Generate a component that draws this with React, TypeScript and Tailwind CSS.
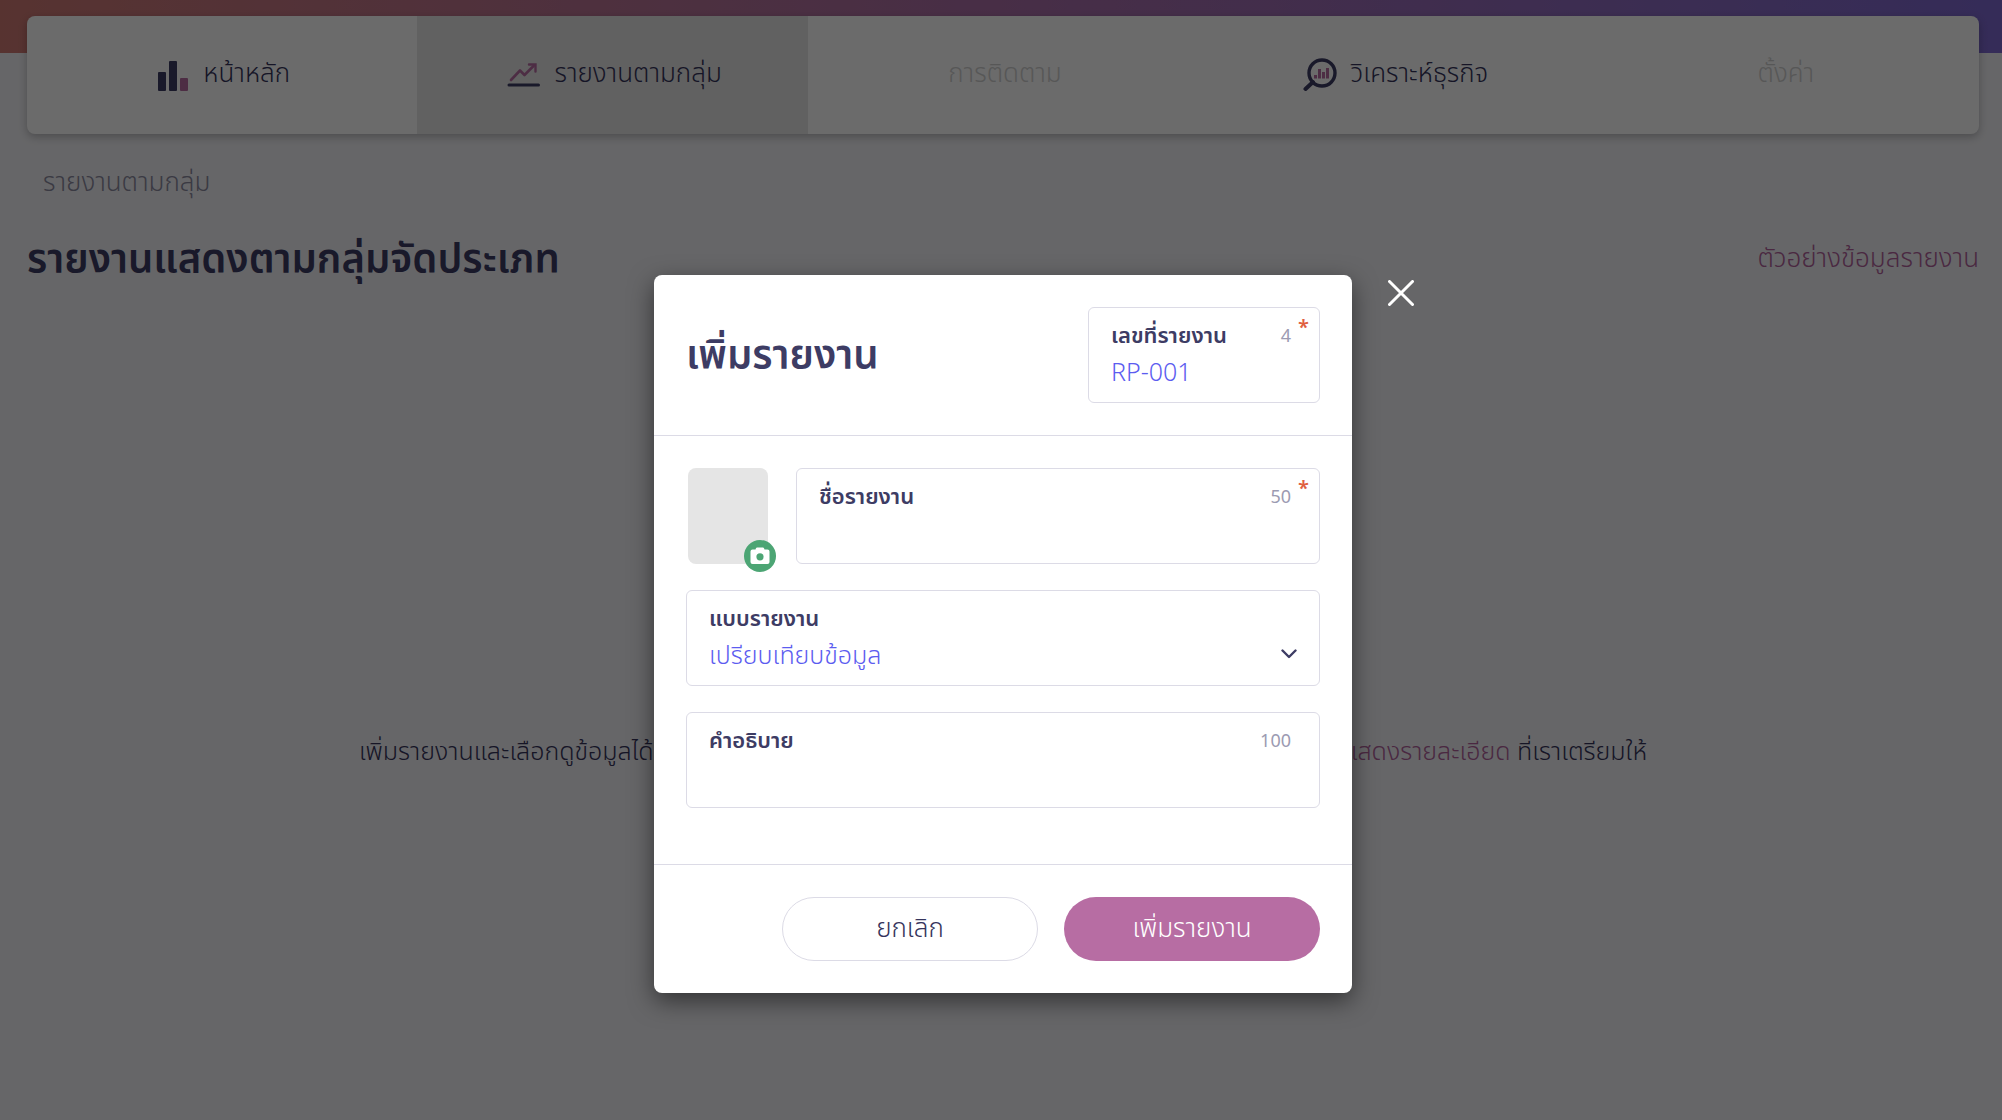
import React from "react";
import { useState } from "react";

const HomeIcon = () => (
  <svg width="31" height="32" viewBox="0 0 31 32" aria-hidden="true">
    <rect x="0" y="13" width="8" height="19" rx="1" fill="#3d3c64" />
    <rect x="11" y="2" width="8" height="30" rx="1" fill="#3d3c64" />
    <rect x="22" y="19" width="8" height="13" rx="1" fill="#b76da3" />
  </svg>
);

const ReportIcon = () => (
  <svg width="33" height="24" viewBox="0 0 33 24" fill="none" aria-hidden="true">
    <path
      d="M4 17 L13 7.500 L17.500 12 L27 2.500"
      stroke="#b76da3"
      strokeWidth="2.600"
      strokeLinecap="round"
      strokeLinejoin="round"
    />
    <path
      d="M22 1.500 H28.500 V8.500"
      stroke="#b76da3"
      strokeWidth="2.400"
      strokeLinecap="round"
    />
    <path d="M2 22 H31.500" stroke="#3d3c64" strokeWidth="3" strokeLinecap="round" />
  </svg>
);

const AnalyzeIcon = () => (
  <svg width="34" height="34" viewBox="0 0 34 34" fill="none" aria-hidden="true">
    <circle cx="19" cy="15" r="13" stroke="#3d3c64" strokeWidth="3.400" />
    <path d="M10 24 L2.500 31" stroke="#3d3c64" strokeWidth="4" strokeLinecap="round" />
    <path
      d="M12.500 17 V20.500 M16.500 11 V20.500 M20.500 14 V20.500 M24.500 10 V20.500"
      stroke="#b76da3"
      strokeWidth="3"
    />
  </svg>
);

const CameraIcon = () => (
  <svg width="20" height="18" viewBox="0 0 20 18" aria-hidden="true">
    <path
      fillRule="evenodd"
      fill="white"
      d="M6.800 0.500 H13.200 Q14.200 0.800 14.500 2.500 H17.500 A2 2 0 0 1 19.500 4.500 V15 A2 2 0 0 1 17.500 17 H2.500 A2 2 0 0 1 0.500 15 V4.500 A2 2 0 0 1 2.500 2.500 H5.500 Q5.800 0.800 6.800 0.500 Z M10 6.200 A3.600 3.600 0 1 0 10 13.400 A3.600 3.600 0 1 0 10 6.200 Z"
    />
  </svg>
);

const navData = [
  { name: "หน้าหลัก", icon: <HomeIcon /> },
  { name: "รายงานตามกลุ่ม", icon: <ReportIcon />, active: true },
  { name: "การติดตาม", disabled: true },
  { name: "วิเคราะห์ธุรกิจ", icon: <AnalyzeIcon /> },
  { name: "ตั้งค่า", disabled: true },
];

type FieldProps = {
  id: string;
  label: string;
  limit?: number;
  required?: boolean;
  className?: string;
  children?: React.ReactNode;
};

const Field = ({ id, label, limit, required, className, children }: FieldProps) => (
  <div
    className={`relative h-24 rounded-md border border-[#dcdbe6] px-[22px] pt-[13px] ${className || ""}`}
  >
    <div className="flex items-center justify-between pr-1.5">
      <label htmlFor={id} className="text-[22px] leading-8 font-semibold">
        {label}
      </label>
      {limit && <span className="text-lg leading-8 text-[#9c9bb2]">{limit}</span>}
    </div>
    {required && (
      <span className="absolute top-2 right-2.5 text-xl leading-6 font-semibold text-[#e0603f]">
        *
      </span>
    )}
    {children}
  </div>
);

const inputStyle =
  "block h-10 w-full bg-transparent text-[25px] leading-10 font-light text-[#5c5cf0] outline-none";

const App = () => {
  const [code, setCode] = useState("RP-001");
  const [name, setName] = useState("");
  const [detail, setDetail] = useState("");

  return (
    <div className="relative min-h-screen bg-[#f3f3f7] font-['Noto_Sans_Thai','Noto_Sans',sans-serif] text-[#3d3c64]">
      <div className="h-[53px] bg-linear-to-r from-[#d07a74] via-[#ab6ea8] to-[#7e69d2]" />
      <div className="-mt-[37px] pr-[23px] pl-[27px]">
        <nav className="relative flex h-[118px] overflow-hidden rounded-lg bg-white shadow-[0_3px_8px_rgba(0,0,0,0.25)]">
          {navData.map((item, index) => (
            <a
              key={index}
              href="#"
              aria-disabled={item.disabled}
              className={`flex flex-1 items-center justify-center gap-3.5 pl-1 text-[26px] font-light ${
                item.active ? "bg-[#e6e6e6]" : ""
              } ${item.disabled ? "text-[#d0d0d0]" : "text-[#35345c]"}`}
            >
              {item.icon}
              <span className="pb-0.5">{item.name}</span>
            </a>
          ))}
        </nav>
        <p className="mt-[29px] pl-4 text-[26px] leading-10 font-light text-[#8b8a9f]">
          รายงานตามกลุ่ม
        </p>
        <div className="mt-8 flex items-center justify-between">
          <h1 className="text-[40px] leading-[52px] font-semibold">
            รายงานแสดงตามกลุ่มจัดประเภท
          </h1>
          <a href="#" className="pb-1 text-[26px] font-light text-[#b0609b]">
            ตัวอย่างข้อมูลรายงาน
          </a>
        </div>
        <div className="mx-auto mt-[445px] flex w-full max-w-[1288px] justify-between text-[25px] leading-10 font-light text-[#35345c]">
          <span>เพิ่มรายงานและเลือกดูข้อมูลได้</span>
          <span>
            <a href="#" className="text-[#b0609b]">
              แสดงรายละเอียด
            </a>{" "}
            ที่เราเตรียมให้
          </span>
        </div>
      </div>

      <div className="absolute inset-0 bg-black/58 pt-[275px] pr-[23px] pl-[27px]">
        <div
          role="dialog"
          aria-labelledby="dialog-title"
          className="relative mx-auto w-full max-w-[698px] rounded-lg bg-white shadow-[0_8px_24px_rgba(0,0,0,0.5)]"
        >
          <button aria-label="ปิด" className="absolute top-1 -right-[63px] p-px">
            <svg width="26" height="26" viewBox="0 0 26 26" aria-hidden="true">
              <path
                d="M1.500 1.500 L24.500 24.500 M24.500 1.500 L1.500 24.500"
                stroke="white"
                strokeWidth="3"
                strokeLinecap="round"
              />
            </svg>
          </button>
          <div className="flex items-center justify-between border-b border-[#dcdbe6] p-8">
            <h2 id="dialog-title" className="pt-1 text-[40px] leading-[52px] font-semibold">
              เพิ่มรายงาน
            </h2>
            <Field id="code" label="เลขที่รายงาน" limit={4} required className="w-[232px]">
              <input
                id="code"
                value={code}
                onChange={(e) => setCode(e.target.value)}
                className={inputStyle}
              />
            </Field>
          </div>
          <div className="flex flex-col gap-[26px] px-8 pt-8 pb-14">
            <div className="flex gap-7">
              <div className="relative ml-0.5 h-24 w-20 rounded-lg bg-[#e5e5e5]">
                <button
                  aria-label="เพิ่มรูป"
                  className="absolute -right-2 -bottom-2 flex h-8 w-8 items-center justify-center rounded-full bg-[#4ca574]"
                >
                  <CameraIcon />
                </button>
              </div>
              <Field id="name" label="ชื่อรายงาน" limit={50} required className="flex-1">
                <input
                  id="name"
                  value={name}
                  onChange={(e) => setName(e.target.value)}
                  className={inputStyle}
                />
              </Field>
            </div>
            <Field id="type" label="แบบรายงาน">
              <select id="type" className={`${inputStyle} appearance-none`}>
                <option>เปรียบเทียบข้อมูล</option>
              </select>
              <svg
                width="16"
                height="10"
                viewBox="0 0 16 10"
                fill="none"
                aria-hidden="true"
                className="pointer-events-none absolute right-[22px] bottom-[26px]"
              >
                <path
                  d="M1.500 1.500 L8 8 L14.500 1.500"
                  stroke="#3d3c64"
                  strokeWidth="2.400"
                  strokeLinecap="round"
                  strokeLinejoin="round"
                />
              </svg>
            </Field>
            <Field id="detail" label="คำอธิบาย" limit={100}>
              <input
                id="detail"
                value={detail}
                onChange={(e) => setDetail(e.target.value)}
                className={inputStyle}
              />
            </Field>
          </div>
          <div className="flex justify-end gap-[26px] border-t border-[#dcdbe6] p-8">
            <button className="h-16 w-64 rounded-full border border-[#dcdbe6] text-[26px] font-light text-[#35345c]">
              ยกเลิก
            </button>
            <button className="h-16 w-64 rounded-full bg-[#b76da3] text-[26px] font-light text-white">
              เพิ่มรายงาน
            </button>
          </div>
        </div>
      </div>
    </div>
  );
};

export default App;
